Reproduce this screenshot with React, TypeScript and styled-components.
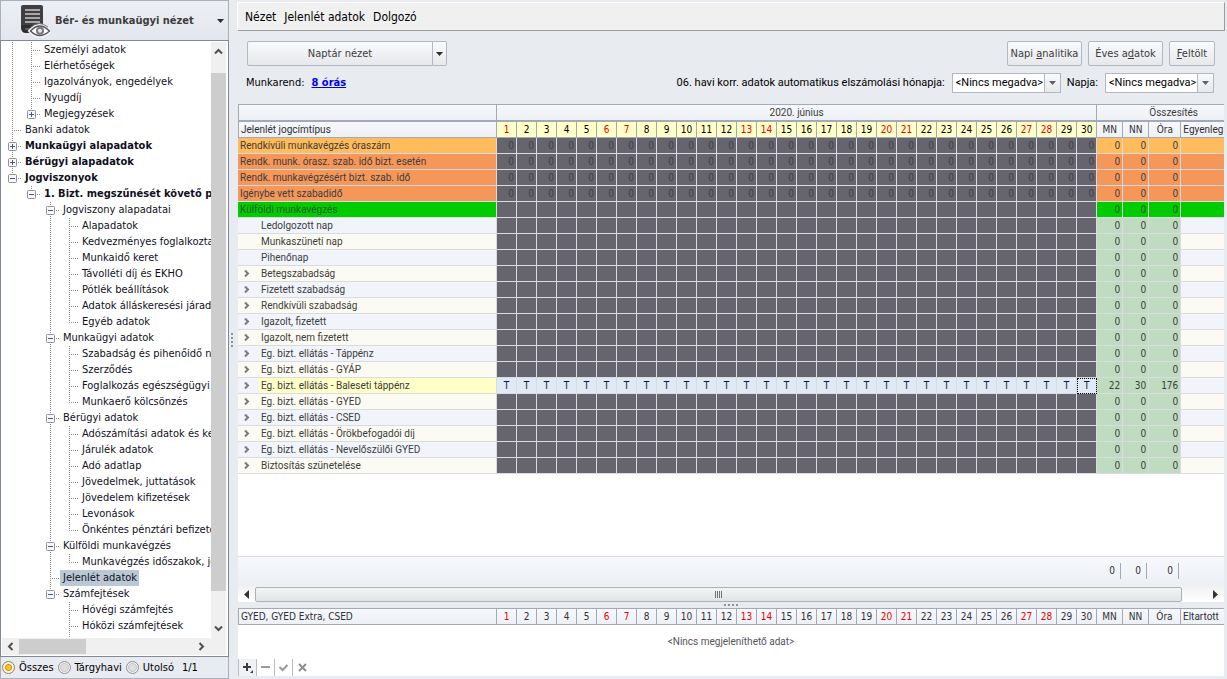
import React from "react";
import styled, { createGlobalStyle, css } from "styled-components";

const FONT = '"DejaVu Sans Condensed", "DejaVu Sans", "Noto Sans", sans-serif';
const GRID_FONT = 'Roboto, "Noto Sans", sans-serif';
const LINE = "#a3aab6";
const PAGE = "#e8ebf0";

const Global = createGlobalStyle`
  *, *::before, *::after { box-sizing: border-box; }
  body { margin: 0; background: ${PAGE}; font-family: ${FONT}; font-size: 11px; line-height: 16px; color: #000; }
  button, select, input { font: inherit; color: inherit; margin: 0; }
  svg { flex: none; display: block; }
`;

const Shell = styled.div`
  display: grid;
  grid-template-columns: 229px 8px minmax(0, 1fr);
  height: 100vh;
  min-height: 640px;
`;

/* ---------- sidebar ---------- */

const Sidebar = styled.aside`
  display: flex;
  flex-direction: column;
  min-height: 0;
`;

const ViewPicker = styled.button`
  display: flex;
  align-items: center;
  height: 40px;
  padding: 0 4px 0 18px;
  border: 1px solid #aab0ba;
  border-bottom: 0;
  background: linear-gradient(#eceff4, #e3e7ed);
  font-weight: bold;
  color: #3c3c3c;
  text-align: left;
`;

const ViewName = styled.span`
  flex: 1;
  padding-left: 4px;
  white-space: nowrap;
`;

const TreePanel = styled.div`
  flex: 1;
  min-height: 0;
  display: grid;
  grid-template-columns: minmax(0, 1fr) 15px;
  grid-template-rows: minmax(0, 1fr) 17px;
  padding: 1px 2px 1px 1px;
  border: 1px solid #828a96;
  background: #fff;
`;

const Tree = styled.ul`
  list-style: none;
  margin: 0;
  padding: 0 0 0 1px;
  overflow: hidden;
`;

const Node = styled.li`
  display: flex;
  height: 16px;
  white-space: nowrap;
`;

const NodeLabel = styled.span<{ $bold?: boolean; $selected?: boolean }>`
  padding: 0 2px 0 3px;
  color: #10101c;
  font-weight: ${(p) => (p.$bold ? "bold" : "normal")};
  background: ${(p) => (p.$selected ? "#bac8d6" : "transparent")};
`;

const TrackV = styled.div`
  display: flex;
  flex-direction: column;
  align-items: center;
  justify-content: space-between;
  padding: 5px 0;
  background: #f0f0f0;
`;

const ThumbV = styled.div`
  flex: 1;
  width: 100%;
  margin: 17px 0 33px;
  background: #cdcdcd;
`;

const TrackH = styled.div`
  grid-column: 1 / -1;
  display: flex;
  align-items: center;
  padding: 0 20px 0 4px;
  background: #f0f0f0;
`;

const ThumbH = styled.div`
  width: 67px;
  height: 15px;
  margin: 0 auto 0 4px;
  background: #cdcdcd;
`;

const Filter = styled.div`
  display: flex;
  align-items: center;
  height: 22px;
  padding-left: 1px;
  border: 1px solid #aab0ba;
  border-top: 0;
  gap: 4px;
`;

const RadioLabel = styled.label`
  display: flex;
  align-items: center;
  gap: 4px;
`;

const Radio = styled.input`
  appearance: none;
  width: 13px;
  height: 13px;
  border: 1px solid #8e8e8e;
  border-radius: 50%;
  background: radial-gradient(circle, #dedede 0 3px, #c8c8c8 4px, #f4f4f4 5px);
  &:checked {
    border-color: #8a8064;
    background: radial-gradient(circle, #ffc21c 0 2px, #d88f10 3px, #fff8e4 4px);
  }
`;

const Count = styled.span`
  padding-left: 4px;
`;

const Splitter = styled.div`
  display: flex;
  align-items: center;
  padding-left: 2px;
`;

/* ---------- main area ---------- */

const Main = styled.main`
  display: flex;
  flex-direction: column;
  min-width: 0;
  min-height: 0;
  padding: 2px 3px 3px 0;
`;

const MenuBar = styled.nav`
  display: flex;
  align-items: center;
  gap: 8px;
  height: 29px;
  margin-right: -1px;
  padding-left: 7px;
  border: 1px solid #fff;
  border-right-color: #9c9c9c;
  border-bottom-color: #9c9c9c;
  background: #f0f0f0;
`;

const MenuItem = styled.button`
  padding: 0;
  border: 0;
  background: none;
  font-size: 12px;
`;

const ToolRow = styled.div`
  display: flex;
  align-items: center;
  margin-top: 10px;
  padding: 0 9px 0 10px;
  gap: 6px;
`;

const raised = css`
  height: 25px;
  border: 1px solid #b4b7bd;
  border-radius: 2px;
  background: linear-gradient(#f9fafc, #e6e8ec);
  color: #3c3c3c;
`;

const SplitButton = styled.div`
  display: flex;
  margin-right: auto;
`;

const SplitMain = styled.button`
  ${raised}
  width: 186px;
  border-radius: 2px 0 0 2px;
`;

const SplitArrow = styled.button`
  ${raised}
  display: grid;
  place-items: center;
  width: 14px;
  padding: 0;
  border-left: 0;
  border-radius: 0 2px 2px 0;
`;

const PushButton = styled.button<{ $w: number }>`
  ${raised}
  min-width: ${(p) => p.$w}px;
  padding: 0 2px;
  white-space: nowrap;
`;

const FieldRow = styled.div`
  display: flex;
  align-items: center;
  margin-top: 7px;
  padding: 0 10px 0 9px;
  white-space: nowrap;
`;

const Schedule = styled.a`
  margin: 0 auto 0 7px;
  color: #0000f0;
  font-weight: bold;
`;

const Field = styled.label`
  display: flex;
  align-items: center;
  gap: 7px;
  margin-left: 6px;
  font-family: ${GRID_FONT};
`;

const SelectBox = styled.span`
  position: relative;
  display: flex;
  width: 109px;
  height: 20px;
  border: 1px solid #b4b7bd;
  background: #fff;
`;

const Select = styled.select`
  flex: 1;
  min-width: 0;
  appearance: none;
  border: 0;
  padding: 0 0 0 3px;
  background: none;
`;

const SelectArrow = styled.span`
  position: absolute;
  inset: 0 0 0 auto;
  width: 16px;
  display: grid;
  place-items: center;
  border-left: 1px solid #b4b7bd;
  background: linear-gradient(#f9fafc, #e6e8ec);
  pointer-events: none;
`;

const GridPanel = styled.section`
  flex: 1;
  min-height: 0;
  display: flex;
  flex-direction: column;
  margin: 11px 0 0 1px;
  overflow: hidden;
  background: #fff;
`;

const Table = styled.table`
  width: 100%;
  table-layout: fixed;
  border-collapse: separate;
  border-spacing: 0;
  font-size: 10px;
  line-height: 14px;
  white-space: nowrap;
`;

const Band = styled.th<{ $indent?: number }>`
  height: 17px;
  padding: 0 0 0 ${(p) => p.$indent ?? 0}px;
  overflow: hidden;
  border: solid ${LINE};
  border-width: 1px 1px 1px 0;
  background: linear-gradient(#f6f8fb, #edf0f5);
  color: #3c3c3c;
  font-family: ${GRID_FONT};
  font-weight: normal;
  &:first-child { border-left-width: 1px; }
  &:last-child { border-right: 0; }
`;

const Head = styled.th<{ $day?: boolean; $red?: boolean; $left?: boolean; $narrow?: boolean }>`
  height: 17px;
  padding: 0 0 0 ${(p) => (p.$left ? 2 : 0)}px;
  overflow: hidden;
  border: solid ${LINE};
  border-width: 1px 1px 1px 0;
  background: ${(p) => (p.$day ? "#ffffc8" : "linear-gradient(#f6f8fb, #edf0f5)")};
  color: ${(p) => (p.$red ? "#f00000" : p.$day ? "#000" : "#303036")};
  font-family: ${(p) => (p.$narrow ? GRID_FONT : FONT)};
  font-weight: normal;
  text-align: ${(p) => (p.$left ? "left" : "center")};
  &:first-child { border-left-width: 1px; }
  &:last-child { border-right: 0; }
`;

const cellBase = css`
  height: 16px;
  padding: 0;
  border: solid #d9dbe1;
  border-width: 0 1px 1px 0;
`;

const NameCell = styled.th<{ $bg: string; $dim?: boolean }>`
  ${cellBase}
  background: ${(p) => p.$bg};
  color: ${(p) => (p.$dim ? "#1f5a1f" : "#3c3c3c")};
  font-family: ${GRID_FONT};
  font-weight: normal;
  line-height: 16px;
  text-align: left;
`;

const NameFlex = styled.div`
  display: flex;
  height: 15px;
`;

const Expander = styled.span`
  display: grid;
  place-items: center;
  width: 21px;
  padding-right: 3px;
`;

const NameText = styled.span<{ $bg?: string }>`
  flex: 1;
  padding-left: 2px;
  background: ${(p) => p.$bg ?? "transparent"};
`;

const DayCell = styled.td<{ $on?: boolean; $focus?: boolean }>`
  ${cellBase}
  padding-right: ${(p) => (p.$on ? 0 : 2)}px;
  background: ${(p) => (p.$on ? "#e0eaf6" : "#66656f")};
  color: ${(p) => (p.$on ? "#101830" : "#404046")};
  text-align: ${(p) => (p.$on ? "center" : "right")};
  outline: ${(p) => (p.$focus ? "1px dotted #000" : "none")};
  outline-offset: -1px;
`;

const SumCell = styled.td<{ $bg: string; $dim?: boolean }>`
  ${cellBase}
  padding-right: 2px;
  background: ${(p) => p.$bg};
  color: ${(p) => (p.$dim ? "#1f5a1f" : "#3c3c3c")};
  text-align: right;
  &:last-child { border-right: 0; }
`;

const Totals = styled.div`
  display: flex;
  justify-content: flex-end;
  height: 30px;
  margin-top: auto;
  padding: 6px 45px 7px 0;
  border-top: 1px solid #d9dbe1;
  background: linear-gradient(#f6f8fb, #ecf0f5);
  font-size: 10px;
  color: #303036;
`;

const Total = styled.span<{ $w: number }>`
  width: ${(p) => p.$w}px;
  padding-right: 5px;
  border-right: 1px solid ${LINE};
  text-align: right;
`;

const GridScroll = styled.div`
  display: flex;
  align-items: center;
  height: 16px;
  padding: 0 6px;
  background: linear-gradient(#f1f1f1, #fff);
`;

const GridThumb = styled.div`
  flex: 1;
  display: grid;
  place-items: center;
  height: 15px;
  margin: 0 31px 0 6px;
  border: 1px solid #adb0b5;
  border-radius: 2px;
  background: linear-gradient(#f4f5f5, #e2e4e4);
`;

const DotBar = styled.div`
  display: grid;
  place-items: center;
  height: 6px;
`;

const Lower = styled.section`
  display: flex;
  flex-direction: column;
  height: 68px;
  margin-left: 1px;
  background: #fff;
`;

const Empty = styled.p`
  flex: 1;
  margin: 0;
  padding-top: 9px;
  font-family: ${GRID_FONT};
  font-size: 10px;
  color: #55555c;
  text-align: center;
`;

const Navigator = styled.div`
  display: flex;
  height: 17px;
`;

const NavButton = styled.button<{ $active?: boolean }>`
  display: grid;
  place-items: center;
  width: 18px;
  padding: 0;
  border: 0;
  border-right: ${(p) => (p.$active === undefined ? "0" : "1px solid #b9bdc4")};
  background: ${(p) => (p.$active ? "#eef1f6" : "#fff")};
  &:first-child {
    width: 19px;
    border-left: 1px solid #b9bdc4;
  }
`;

/* ---------- drawings ---------- */

const LogIcon = () => (
  <svg width="32" height="34" viewBox="0 0 32 34" aria-hidden="true">
    <path d="M4 1h18q2 0 2 2v24H7q-5 0-5-5V3q0-2 2-2z" fill="#3f3f41" />
    <path d="M2 23q0-2 3-2h19v8H7q-5 0-5-6z" fill="#2d2d2f" />
    <path d="M6 6h15M6 10h15M6 14h15M6 18h15" stroke="#c9c9cb" strokeWidth="1.6" />
    <path d="M6 25h11" stroke="#8b8b8d" />
    <path d="M11 27q9.500-11 20 0q-10.500 10-20 0z" fill="#f5f5f5" stroke="#f2f2f2" strokeWidth="3.500" />
    <path d="M11.500 27q9-10 19 0q-10 9-19 0z" fill="#fafafa" stroke="#55555a" strokeWidth="1.3" />
    <circle cx="21" cy="26.800" r="4" fill="#77777c" />
    <circle cx="21" cy="26.800" r="2" fill="#e6e6e8" />
    <path d="M12 23q8-7 17 0" fill="none" stroke="#77777c" />
  </svg>
);

const Down = ({ color = "#2c2c2c" }: { color?: string }) => (
  <svg width="7" height="4" viewBox="0 0 7 4" aria-hidden="true">
    <path d="M0 0h7L3.5 4z" fill={color} />
  </svg>
);

const angle: Record<string, string> = {
  up: "M1 6.5L4.500 3L8 6.500",
  down: "M1 2.5L4.500 6L8 2.500",
  left: "M6.500 1L3 4.500L6.500 8",
  right: "M2.500 1L6 4.500L2.500 8",
};

const Chevron = ({ dir, color = "#505050" }: { dir: string; color?: string }) => (
  <svg width="9" height="9" viewBox="0 0 9 9" aria-hidden="true">
    <path d={angle[dir]} fill="none" stroke={color} strokeWidth="2" />
  </svg>
);

const RowArrow = () => (
  <svg width="6" height="7" viewBox="0 0 6 7" aria-hidden="true">
    <path d="M1 0.500L4 3.500L1 6.500" fill="none" stroke="#77777c" strokeWidth="2" />
  </svg>
);

const Triangle = ({ right }: { right?: boolean }) => (
  <svg width="5" height="9" viewBox="0 0 5 9" aria-hidden="true">
    <path d={right ? "M0 0L5 4.500L0 9z" : "M5 0L0 4.500L5 9z"} fill="#333" />
  </svg>
);

type Mark = "." | "|" | "t" | "l" | "+" | "-" | "P" | "M";

/* "." blank, "|" pass, "t" tee, "l" last; +/- boxes continue below, P/M boxes end the branch */
const Guide = ({ mark }: { mark: Mark }) => {
  const box = "+-PM".includes(mark);
  const below = "|t+-".includes(mark);
  return (
    <svg width="19" height="16" viewBox="0 0 19 16" aria-hidden="true">
      {mark !== "." && (
        <path d={below ? "M9.500 0V16" : "M9.500 0V9"} stroke="#8c8c8c" strokeDasharray="1 1" />
      )}
      {mark !== "." && mark !== "|" && <path d="M9 8.500H19" stroke="#8c8c8c" strokeDasharray="1 1" />}
      {box && (
        <>
          <rect x="5.500" y="4.500" width="8" height="8" rx="1" fill="#f7f7f7" stroke="#919191" />
          <path d="M7 8.500h5" stroke="#3c5aa8" />
          {(mark === "+" || mark === "P") && <path d="M9.500 6v5" stroke="#3c5aa8" />}
        </>
      )}
    </svg>
  );
};

/* ---------- data ---------- */

type TreeRow = [guides: string, label: string, bold?: boolean];

const tree: TreeRow[] = [
  ["|t", "Személyi adatok"],
  ["|t", "Elérhetőségek"],
  ["|t", "Igazolványok, engedélyek"],
  ["|t", "Nyugdíj"],
  ["|P", "Megjegyzések"],
  ["t", "Banki adatok"],
  ["+", "Munkaügyi alapadatok", true],
  ["+", "Bérügyi alapadatok", true],
  ["M", "Jogviszonyok", true],
  [".M", "1. Bizt. megszűnését követő p", true],
  ["..-", "Jogviszony alapadatai"],
  ["..|t", "Alapadatok"],
  ["..|t", "Kedvezményes foglalkozta"],
  ["..|t", "Munkaidő keret"],
  ["..|t", "Távolléti díj és EKHO"],
  ["..|t", "Pótlék beállítások"],
  ["..|t", "Adatok álláskeresési járade"],
  ["..|l", "Egyéb adatok"],
  ["..-", "Munkaügyi adatok"],
  ["..|t", "Szabadság és pihenőidő ny"],
  ["..|t", "Szerződés"],
  ["..|t", "Foglalkozás egészségügyi a"],
  ["..|l", "Munkaerő kölcsönzés"],
  ["..-", "Bérügyi adatok"],
  ["..|t", "Adószámítási adatok és ked"],
  ["..|t", "Járulék adatok"],
  ["..|t", "Adó adatlap"],
  ["..|t", "Jövedelmek, juttatások"],
  ["..|t", "Jövedelem kifizetések"],
  ["..|t", "Levonások"],
  ["..|l", "Önkéntes pénztári befizeté"],
  ["..-", "Külföldi munkavégzés"],
  ["..|l", "Munkavégzés időszakok, jö"],
  ["..t", "Jelenlét adatok"],
  ["..M", "Számfejtések"],
  ["...t", "Hóvégi számfejtés"],
  ["...t", "Hóközi számfejtések"],
  ["...|", ""],
];

const days = Array.from({ length: 30 }, (_, i) => i + 1);
const isRed = (d: number) => d === 1 || d % 7 === 6 || d % 7 === 0;

type Kind = "amber" | "orange" | "green" | "leaf" | "group";
const rows: { name: string; kind: Kind; active?: boolean }[] = [
  { name: "Rendkívüli munkavégzés óraszám", kind: "amber" },
  { name: "Rendk. munk. órasz. szab. idő bizt. esetén", kind: "orange" },
  { name: "Rendk. munkavégzésért bizt. szab. idő", kind: "orange" },
  { name: "Igénybe vett szabadidő", kind: "orange" },
  { name: "Külföldi munkavégzés", kind: "green" },
  { name: "Ledolgozott nap", kind: "leaf" },
  { name: "Munkaszüneti nap", kind: "leaf" },
  { name: "Pihenőnap", kind: "leaf" },
  { name: "Betegszabadság", kind: "group" },
  { name: "Fizetett szabadság", kind: "group" },
  { name: "Rendkívüli szabadság", kind: "group" },
  { name: "Igazolt, fizetett", kind: "group" },
  { name: "Igazolt, nem fizetett", kind: "group" },
  { name: "Eg. bizt. ellátás - Táppénz", kind: "group" },
  { name: "Eg. bizt. ellátás - GYÁP", kind: "group" },
  { name: "Eg. bizt. ellátás - Baleseti táppénz", kind: "group", active: true },
  { name: "Eg. bizt. ellátás - GYED", kind: "group" },
  { name: "Eg. bizt. ellátás - CSED", kind: "group" },
  { name: "Eg. bizt. ellátás - Örökbefogadói díj", kind: "group" },
  { name: "Eg. bizt. ellátás - Nevelőszülői GYED", kind: "group" },
  { name: "Biztosítás szünetelése", kind: "group" },
];

const solid: Partial<Record<Kind, string>> = { amber: "#ffbb5c", orange: "#f6975a", green: "#00cc00" };

const NameCol = styled.col`
  width: 259px;
`;
const NumberCol = styled.col<{ $w: number }>`
  width: ${(p) => p.$w}px;
`;

const Cols = () => (
  <colgroup>
    <NameCol />
    {days.map((d) => (
      <NumberCol key={d} $w={20} />
    ))}
    <NumberCol $w={26} />
    <NumberCol $w={26} />
    <NumberCol $w={32} />
    <col />
  </colgroup>
);

const Combo = ({ label }: { label: string }) => (
  <Field>
    {label}
    <SelectBox>
      <Select>
        <option>&lt;Nincs megadva&gt;</option>
      </Select>
      <SelectArrow>
        <Down color="#606066" />
      </SelectArrow>
    </SelectBox>
  </Field>
);

export default function App() {
  return (
    <>
      <Global />
      <Shell>
        <Sidebar>
          <ViewPicker>
            <LogIcon />
            <ViewName>Bér- és munkaügyi nézet</ViewName>
            <Down />
          </ViewPicker>
          <TreePanel>
            <Tree>
              {tree.map(([guides, label, bold], i) => (
                <Node key={i}>
                  {guides.split("").map((m, j) => (
                    <Guide key={j} mark={m as Mark} />
                  ))}
                  <NodeLabel $bold={bold} $selected={label === "Jelenlét adatok"}>
                    {label}
                  </NodeLabel>
                </Node>
              ))}
            </Tree>
            <TrackV>
              <Chevron dir="up" />
              <ThumbV />
              <Chevron dir="down" />
            </TrackV>
            <TrackH>
              <Chevron dir="left" />
              <ThumbH />
              <Chevron dir="right" />
            </TrackH>
          </TreePanel>
          <Filter>
            <RadioLabel>
              <Radio type="radio" name="scope" defaultChecked />
              Összes
            </RadioLabel>
            <RadioLabel>
              <Radio type="radio" name="scope" />
              Tárgyhavi
            </RadioLabel>
            <RadioLabel>
              <Radio type="radio" name="scope" />
              Utolsó
            </RadioLabel>
            <Count>1/1</Count>
          </Filter>
        </Sidebar>

        <Splitter>
          <svg width="3" height="14" viewBox="0 0 3 14" aria-hidden="true">
            <path d="M0 1h2M0 5h2M0 9h2M0 13h2" stroke="#8e939c" strokeWidth="2" />
          </svg>
        </Splitter>

        <Main>
          <MenuBar>
            <MenuItem>Nézet</MenuItem>
            <MenuItem>Jelenlét adatok</MenuItem>
            <MenuItem>Dolgozó</MenuItem>
          </MenuBar>

          <ToolRow>
            <SplitButton>
              <SplitMain>Naptár nézet</SplitMain>
              <SplitArrow aria-label="További nézetek">
                <Down />
              </SplitArrow>
            </SplitButton>
            <PushButton $w={75}>
              Napi <u>a</u>nalitika
            </PushButton>
            <PushButton $w={75}>
              Éves a<u>d</u>atok
            </PushButton>
            <PushButton $w={46}>
              <u>F</u>eltölt
            </PushButton>
          </ToolRow>

          <FieldRow>
            Munkarend:
            <Schedule href="#munkarend">8 órás</Schedule>
            <Combo label="06. havi korr. adatok automatikus elszámolási hónapja:" />
            <Combo label="Napja:" />
          </FieldRow>

          <GridPanel>
            <Table>
              <Cols />
              <thead>
                <tr>
                  <Band />
                  <Band colSpan={30}>2020. június</Band>
                  <Band colSpan={4} $indent={26}>
                    Összesítés
                  </Band>
                </tr>
                <tr>
                  <Head $left $narrow>
                    Jelenlét jogcímtípus
                  </Head>
                  {days.map((d) => (
                    <Head key={d} $day $red={isRed(d)}>
                      {d}
                    </Head>
                  ))}
                  <Head>MN</Head>
                  <Head>NN</Head>
                  <Head>Óra</Head>
                  <Head $left $narrow>
                    Egyenleg
                  </Head>
                </tr>
              </thead>
              <tbody>
                {rows.map((r, i) => {
                  const full = solid[r.kind];
                  const stripe = i % 2 ? "#f1f5fb" : "#fcfbf3";
                  const bg = full ?? stripe;
                  const dim = r.kind === "green";
                  const zero = r.kind === "amber" || r.kind === "orange";
                  const sums = r.active ? [22, 30, 176] : [0, 0, 0];
                  return (
                    <tr key={r.name}>
                      <NameCell $bg={bg} $dim={dim}>
                        <NameFlex>
                          {!full && <Expander>{r.kind === "group" && <RowArrow />}</Expander>}
                          <NameText $bg={r.active ? "#ffffc8" : undefined}>{r.name}</NameText>
                        </NameFlex>
                      </NameCell>
                      {days.map((d) => (
                        <DayCell key={d} $on={r.active} $focus={r.active && d === 30}>
                          {r.active ? "T" : zero ? 0 : null}
                        </DayCell>
                      ))}
                      {sums.map((s, j) => (
                        <SumCell key={j} $bg={full ?? "#c0dcc0"} $dim={dim}>
                          {s}
                        </SumCell>
                      ))}
                      <SumCell $bg={bg} />
                    </tr>
                  );
                })}
              </tbody>
            </Table>
            <Totals>
              <Total $w={26}>0</Total>
              <Total $w={26}>0</Total>
              <Total $w={32}>0</Total>
            </Totals>
            <GridScroll>
              <Triangle />
              <GridThumb>
                <svg width="7" height="7" viewBox="0 0 7 7" aria-hidden="true">
                  <path d="M0.500 0v7M2.500 0v7M4.500 0v7M6.500 0v7" stroke="#707378" />
                </svg>
              </GridThumb>
              <Triangle right />
            </GridScroll>
          </GridPanel>

          <DotBar>
            <svg width="14" height="2" viewBox="0 0 14 2" aria-hidden="true">
              <path d="M0 1h2M4 1h2M8 1h2M12 1h2" stroke="#8e939c" strokeWidth="2" />
            </svg>
          </DotBar>

          <Lower>
            <Table>
              <Cols />
              <thead>
                <tr>
                  <Head $left>GYED, GYED Extra, CSED</Head>
                  {days.map((d) => (
                    <Head key={d} $red={isRed(d)}>
                      {d}
                    </Head>
                  ))}
                  <Head>MN</Head>
                  <Head>NN</Head>
                  <Head>Óra</Head>
                  <Head $left $narrow>
                    Eltartott
                  </Head>
                </tr>
              </thead>
            </Table>
            <Empty>&lt;Nincs megjeleníthető adat&gt;</Empty>
            <Navigator>
              <NavButton $active aria-label="Új sor">
                <svg width="11" height="11" viewBox="0 0 11 11" aria-hidden="true">
                  <path d="M1 5h8M5 1v8" stroke="#3c3c40" strokeWidth="2" />
                  <path d="M11 8v3H8z" fill="#3c3c40" />
                </svg>
              </NavButton>
              <NavButton $active={false} aria-label="Törlés">
                <svg width="9" height="9" viewBox="0 0 9 9" aria-hidden="true">
                  <path d="M0 4h9" stroke="#9a9a9e" strokeWidth="2" />
                </svg>
              </NavButton>
              <NavButton $active={false} aria-label="Mentés">
                <svg width="9" height="9" viewBox="0 0 9 9" aria-hidden="true">
                  <path d="M0.500 4L3.500 7L8.500 2" fill="none" stroke="#9a9a9e" strokeWidth="2" />
                </svg>
              </NavButton>
              <NavButton aria-label="Mégse">
                <svg width="9" height="9" viewBox="0 0 9 9" aria-hidden="true">
                  <path d="M1 1L8 8M8 1L1 8" stroke="#8e8e92" strokeWidth="2" />
                </svg>
              </NavButton>
            </Navigator>
          </Lower>
        </Main>
      </Shell>
    </>
  );
}
